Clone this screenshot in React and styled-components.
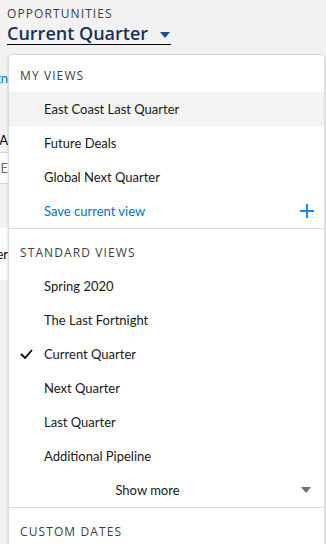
import React from 'react'
import styled, { createGlobalStyle } from 'styled-components'

const GlobalStyle = createGlobalStyle`
    body {
        margin: 0;
        background: #f3f2f2;
        font-family: Lato, "Open Sans", "Liberation Sans", sans-serif;
        color: #080707;
    }
`;

const Page = styled.div`
    position: relative;
    width: 326px;
    height: 544px;
    overflow: hidden;
    background: #f3f2f2;
`;

const Header = styled.div`
    padding: 6px 0 0 7px;
`;

const Eyebrow = styled.div`
    font-family: "Open Sans", sans-serif;
    font-size: 12px;
    line-height: 16px;
    letter-spacing: 1.1px;
    text-transform: uppercase;
    color: #3e3e3c;
`;

const TitleButton = styled.div`
    display: inline-flex;
    align-items: center;
    width: 164px;
    height: 22px;
    border-bottom: 1px solid #080707;
    color: #16325c;
    font-family: "Open Sans", sans-serif;
    font-size: 18px;
    font-weight: 600;
    line-height: 22px;
`;

const TitleArrow = styled.span`
    margin-left: 12px;
    margin-top: 4px;
    width: 0;
    height: 0;
    border-left: 5px solid transparent;
    border-right: 5px solid transparent;
    border-top: 6px solid #1b5297;
`;

const Backdrop = styled.div`
    display: flex;
    flex-direction: column;
    width: 8px;
    margin-top: 24px;
    overflow: hidden;
`;

const Peek = styled.div`
    display: flex;
    justify-content: flex-end;
    white-space: nowrap;
    height: ${p => p.h}px;
    align-items: center;
    font-size: 13px;
    color: ${p => p.color || '#080707'};
    background: ${p => p.bg || 'transparent'};
    border-top: ${p => p.boxed ? '1px solid #dddbda' : 'none'};
    border-bottom: ${p => p.boxed ? '1px solid #dddbda' : 'none'};
    box-sizing: border-box;
`;

const Panel = styled.div`
    position: absolute;
    top: 54px;
    left: 8px;
    right: 1px;
    bottom: -20px;
    background: #fff;
    border: 1px solid #dddbda;
    border-radius: 4px;
    box-shadow: 0 2px 3px rgba(0, 0, 0, 0.16);
`;

const Section = styled.div`
    padding-top: ${p => p.first ? 3 : 6}px;
    border-top: ${p => p.first ? 'none' : '1px solid #dddbda'};
`;

const SectionTitle = styled.div`
    height: 34px;
    display: flex;
    align-items: center;
    padding-left: 11px;
    font-family: "Open Sans", sans-serif;
    font-size: 12px;
    letter-spacing: 1.1px;
    text-transform: uppercase;
    color: #3e3e3c;
`;

const Item = styled.div`
    height: 34px;
    display: flex;
    align-items: center;
    padding: 0 10px 0 11px;
    font-size: 13px;
    color: ${p => p.link ? '#0070d2' : '#181818'};
    background: ${p => p.active ? '#f3f3f3' : 'transparent'};
`;

const CheckSlot = styled.span`
    width: 24px;
    display: flex;
    align-items: center;
`;

const Label = styled.span`
    flex: 1;
`;

const ShowMoreText = styled.span`
    width: 207px;
    text-align: center;
    margin-left: 24px;
`;

const MoreArrow = styled.span`
    margin-left: auto;
    margin-right: 3px;
    width: 0;
    height: 0;
    border-left: 5px solid transparent;
    border-right: 5px solid transparent;
    border-top: 6px solid #706e6b;
`;

const Check = () => (
    <svg width="13" height="10" viewBox="0 0 13 10">
        <path d="M1 5l4 4 7-8" fill="none" stroke="#080707" strokeWidth="1.8" />
    </svg>
)

const Plus = () => (
    <svg width="14" height="14" viewBox="0 0 14 14">
        <path d="M7 0v14M0 7h14" stroke="#1589ee" strokeWidth="2" />
    </svg>
)

const myViews = ['East Coast Last Quarter', 'Future Deals', 'Global Next Quarter']
const standardViews = ['Spring 2020', 'The Last Fortnight', 'Current Quarter', 'Next Quarter', 'Last Quarter', 'Additional Pipeline']

const App = () => {
    return (
        <>
            <GlobalStyle />
            <Page>
                <Header>
                    <Eyebrow>Opportunities</Eyebrow>
                    <TitleButton>
                        Current Quarter
                        <TitleArrow />
                    </TitleButton>
                </Header>
                <Backdrop>
                    <Peek h={18} color="#0070d2">Assign</Peek>
                    <Peek h={44} />
                    <Peek h={18}>A</Peek>
                    <Peek h={3} />
                    <Peek h={32} bg="#fff" boxed color="#706e6b">E</Peek>
                    <Peek h={44} />
                    <Peek h={52} bg="#fff">Owner</Peek>
                </Backdrop>
                <Panel>
                    <Section first>
                        <SectionTitle>My Views</SectionTitle>
                        {myViews.map((v, i) => (
                            <Item key={v} active={i === 0}>
                                <CheckSlot />
                                <Label>{v}</Label>
                            </Item>
                        ))}
                        <Item link>
                            <CheckSlot />
                            <Label>Save current view</Label>
                            <Plus />
                        </Item>
                    </Section>
                    <Section>
                        <SectionTitle>Standard Views</SectionTitle>
                        {standardViews.map(v => (
                            <Item key={v}>
                                <CheckSlot>{v === 'Current Quarter' && <Check />}</CheckSlot>
                                <Label>{v}</Label>
                            </Item>
                        ))}
                        <Item>
                            <ShowMoreText>Show more</ShowMoreText>
                            <MoreArrow />
                        </Item>
                    </Section>
                    <Section>
                        <SectionTitle>Custom Dates</SectionTitle>
                    </Section>
                </Panel>
            </Page>
        </>
    )
}

export default App
